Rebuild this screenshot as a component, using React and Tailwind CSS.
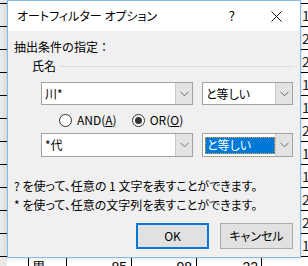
import React from "react";

const rowsRight = ["1", "2", "2", "1", "1", "2", "1", "1", "2", "2", "1"];

function Chevron() {
  return (
    <svg width="9" height="6" viewBox="0 0 9 6" fill="none">
      <path d="M0.5 0.8 L4.5 4.8 L8.5 0.8" stroke="#6d6d6d" strokeWidth="1" />
    </svg>
  );
}

function Combo({ w, children, selected }) {
  return (
    <div className={`flex h-full border border-[#a2a2a2] bg-white ${w}`}>
      <div className="flex flex-1 items-center pl-[2px]">
        {selected ? (
          <span className="flex h-[17px] flex-1 items-center border border-dotted border-[#f2a33a] bg-[#0078d7] pl-[1px] text-white">
            {children}
          </span>
        ) : (
          <span className="pl-[1px]">{children}</span>
        )}
      </div>
      <div className="flex w-[17px] items-center justify-center border-l border-[#c8c8c8] bg-[#e3e3e3]">
        <Chevron />
      </div>
    </div>
  );
}

function Radio({ checked }) {
  return (
    <span className="flex h-[13px] w-[13px] items-center justify-center rounded-full border border-[#333333] bg-white">
      {checked && <span className="h-[7px] w-[7px] rounded-full bg-[#333333]" />}
    </span>
  );
}

export default function App() {
  return (
    <div className="relative h-[266px] w-[308px] overflow-hidden bg-white font-['Noto_Sans_CJK_JP',sans-serif] text-[12px] text-black [font-feature-settings:'palt']">
      {/* background sheet */}
      <div className="flex h-full w-full">
        <div className="w-[7px] bg-[#e9e9e9]" />
        <div className="flex-1" />
      </div>
      <div className="pointer-events-none absolute inset-0 flex flex-col pt-[3px]">
        {Array.from({ length: 12 }).map((_, i) => (
          <div key={i} className="h-[23px] shrink-0 border-t border-black" />
        ))}
      </div>
      {/* right strip digits */}
      <div className="absolute left-[302px] top-[3px] flex flex-col">
        {rowsRight.map((d, i) => (
          <div key={i} className="flex h-[23px] items-center text-[14px] leading-none text-[#222]">
            {d}
          </div>
        ))}
      </div>
      {/* bottom row */}
      <div className="absolute left-0 top-[256px] flex h-[23px] w-[308px] font-['Liberation_Sans',sans-serif] text-[14px] leading-[16px]">
        <div className="w-[29px] border-r border-black" />
        <div className="w-[38px] border-r border-black pl-[3px] pt-[3px]">男</div>
        <div className="w-[65px] border-r border-black pr-[4px] pt-[3px] text-right">85</div>
        <div className="w-[65px] border-r border-black pr-[4px] pt-[3px] text-right">98</div>
        <div className="w-[65px] border-r border-black pr-[3px] pt-[3px] text-right">22</div>
      </div>

      {/* dialog */}
      <div className="absolute left-[7px] top-0 flex h-[258px] w-[294px] flex-col border border-[#86b9ea] bg-[#f0f0f0] shadow-[0_0_6px_rgba(0,0,0,0.15)]">
        <div className="flex h-[30px] items-center bg-white pl-[9px]">
          <span className="leading-[16px]">オートフィルター オプション</span>
          <span className="ml-auto mr-[36px] text-[13px] leading-[16px]">?</span>
          <svg width="11" height="11" viewBox="0 0 11 11" className="mr-[18px]">
            <path d="M0.5 0.5 L10.5 10.5 M10.5 0.5 L0.5 10.5" stroke="#111" strokeWidth="1" />
          </svg>
        </div>
        <div className="flex flex-1 flex-col pl-[6px] pr-[6px]">
          <div className="mt-[7px] h-[18px] leading-[18px] [font-feature-settings:normal]">抽出条件の指定：</div>
          <div className="mt-[1px] flex h-[18px] items-center">
            <span className="ml-[18px] leading-[18px]">氏名</span>
            <div className="ml-[4px] h-px flex-1 bg-[#dcdcdc]" />
          </div>
          <div className="mt-[7px] flex h-[23px] pl-[27px]">
            <Combo w="w-[152px]">川*</Combo>
            <div className="w-[9px]" />
            <Combo w="w-[91px]">と等しい</Combo>
          </div>
          <div className="mt-[6px] flex h-[18px] items-center pl-[45px]">
            <Radio />
            <span className="ml-[5px] leading-[18px]">
              AND(<span className="underline">A</span>)
            </span>
            <span className="ml-[15px]">
              <Radio checked />
            </span>
            <span className="ml-[5px] leading-[18px]">
              OR(<span className="underline">O</span>)
            </span>
          </div>
          <div className="mt-[4px] flex h-[24px] pl-[27px]">
            <Combo w="w-[152px]">*代</Combo>
            <div className="w-[9px]" />
            <Combo w="w-[91px]" selected>
              と等しい
            </Combo>
          </div>
          <div className="mt-[20px] h-[18px] whitespace-nowrap leading-[18px]">? を使って、任意の 1 文字を表すことができます。</div>
          <div className="mt-[1px] h-[18px] whitespace-nowrap leading-[18px]">* を使って、任意の文字列を表すことができます。</div>
          <div className="mt-[9px] flex h-[26px] justify-end pr-[1px]">
            <button className="flex w-[73px] items-center justify-center border-2 border-[#0078d7] bg-[#e1e1e1] leading-[16px]">
              OK
            </button>
            <button className="ml-[11px] flex w-[73px] items-center justify-center border border-[#adadad] bg-[#e1e1e1] leading-[16px]">
              キャンセル
            </button>
          </div>
        </div>
      </div>
    </div>
  );
}
